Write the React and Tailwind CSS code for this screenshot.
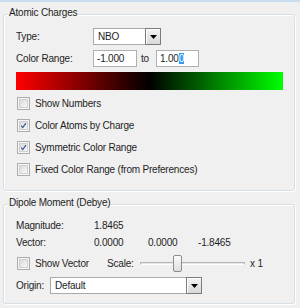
import React from "react";

function DropBtn() {
  return (
    <div className="-my-px -mr-px w-[16px] h-[17px] border border-[#7c7c7c] bg-gradient-to-b from-[#f4f4f4] to-[#d8d8d8] shadow-[inset_1px_1px_0_#fff] flex items-center justify-center shrink-0">
      <svg width="7" height="4" viewBox="0 0 7 4">
        <path d="M0 0H7L3.5 4Z" fill="#000" />
      </svg>
    </div>
  );
}

function Select({ value, w }) {
  return (
    <div className={`${w} h-[17px] flex border border-[#a9a9a9] bg-white`}>
      <div className="flex-1 pl-[4px] leading-[15px]">{value}</div>
      <DropBtn />
    </div>
  );
}

function Check({ checked }) {
  return (
    <div className="w-[13px] h-[13px] border border-[#adadad] bg-[#f6f6f6] p-px shrink-0">
      <div className="w-full h-full border border-[#cfcfcf] bg-gradient-to-br from-[#d9d9d9] to-[#f9f9f9] flex items-center justify-center">
        {checked && (
          <svg width="9" height="9" viewBox="0 0 9 9">
            <path d="M1.5 4.6 L3.6 7.2 L7.6 1.4" stroke="#3f5596" strokeWidth="1.5" fill="none" />
          </svg>
        )}
      </div>
    </div>
  );
}

function CheckRow({ checked, label, first }) {
  return (
    <div className={`${first ? "mt-[7px]" : "mt-[9px]"} h-[13px] pl-[13px] flex items-center gap-[5px]`}>
      <Check checked={checked} />
      <span>{label}</span>
    </div>
  );
}

function Title({ children }) {
  return (
    <div className="-mt-[8px] ml-[4px] px-px w-fit h-[12px] leading-[12px] bg-[#f0f0f0]">
      {children}
    </div>
  );
}

const box =
  "w-[292px] border border-[#d5dfe5] rounded-[3px] shadow-[inset_1px_1px_0_#ffffff,1px_1px_0_#ffffff]";

export default function App() {
  return (
    <div className="w-[300px] h-[308px] overflow-hidden bg-[#f0f0f0] border-t-2 border-[#c9dcf0] pt-[12px] pl-[3px] font-['Liberation_Sans',Arial,sans-serif] text-[10px] tracking-[-0.2px] leading-[12px] text-[#1e1e1e]">
      <div className={`${box} h-[177px]`}>
        <Title>Atomic Charges</Title>
        <div className="mt-[9px] h-[17px] pl-[12px] flex items-center">
          <span className="w-[77px]">Type:</span>
          <Select value="NBO" w="w-[68px]" />
        </div>
        <div className="mt-[5px] h-[17px] pl-[12px] flex items-center">
          <span className="w-[77px]">Color Range:</span>
          <div className="w-[44px] h-[17px] border border-[#b0b0b0] bg-white pl-[3px] leading-[15px]">-1.000</div>
          <span className="ml-[4px] w-[15px]">to</span>
          <div className="w-[43px] h-[17px] border border-[#b0b0b0] bg-white pl-[3px] leading-[15px]">
            1.00<span className="bg-[#3399ff] text-white">0</span>
          </div>
        </div>
        <div className="mt-[5px] ml-[12px] w-[267px] h-[18px] bg-[linear-gradient(to_right,#ff0000,#000000,#00ff00)]" />
        <CheckRow first label="Show Numbers" />
        <CheckRow checked label="Color Atoms by Charge" />
        <CheckRow checked label="Symmetric Color Range" />
        <CheckRow label="Fixed Color Range (from Preferences)" />
      </div>

      <div className={`${box} h-[100px] mt-[13px]`}>
        <Title>Dipole Moment (Debye)</Title>
        <div className="mt-[11px] h-[12px] pl-[12px] flex items-center">
          <span className="w-[78px]">Magnitude:</span>
          <span>1.8465</span>
        </div>
        <div className="mt-[5px] h-[12px] pl-[12px] flex items-center">
          <span className="w-[78px]">Vector:</span>
          <span className="w-[54px]">0.0000</span>
          <span className="w-[50px]">0.0000</span>
          <span>-1.8465</span>
        </div>
        <div className="mt-[6px] h-[17px] pl-[13px] flex items-center">
          <Check />
          <span className="ml-[5px] w-[72px]">Show Vector</span>
          <span className="w-[33px]">Scale:</span>
          <div className="relative w-[105px] h-[17px] flex items-center">
            <div className="w-full h-[3px] border border-[#b5b5b5] border-b-white bg-[#e6e6e6]" />
            <div className="absolute left-[33px] top-0 w-[9px] h-[17px] rounded-[2px] border border-[#8c8c8c] bg-gradient-to-b from-[#fbfbfb] to-[#dedede]" />
          </div>
          <span className="ml-[5px]">x 1</span>
        </div>
        <div className="mt-[5px] h-[17px] pl-[12px] flex items-center">
          <span className="w-[34px]">Origin:</span>
          <Select value="Default" w="w-[152px]" />
        </div>
      </div>
    </div>
  );
}
